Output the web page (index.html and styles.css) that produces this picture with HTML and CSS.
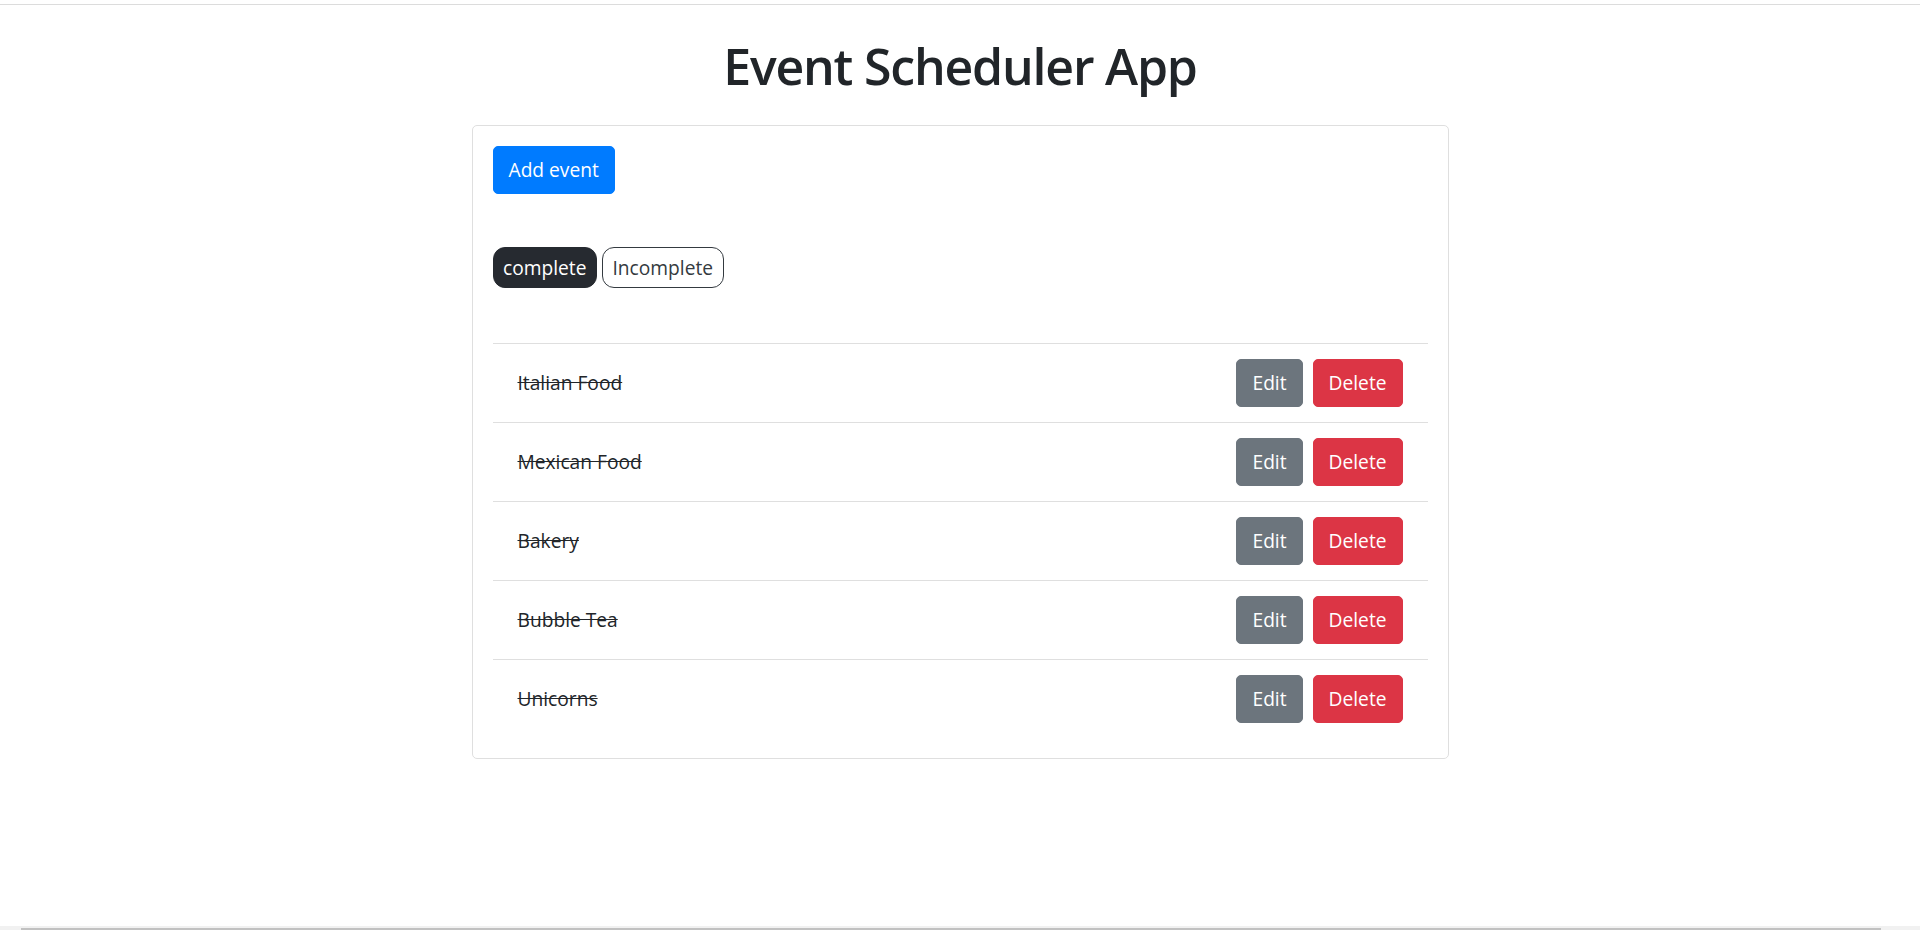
FILE: index.html
```html
<!DOCTYPE html>
<html lang="en">
<head>
<meta charset="utf-8">
<title>Event Scheduler App</title>
<link rel="stylesheet" href="styles.css">
</head>
<body>
<div class="topline"></div>
<h1 class="title">Event Scheduler App</h1>
<div class="card">
  <div class="actions">
    <button class="btn btn-primary">Add event</button>
  </div>
  <div class="filters">
    <button class="pill pill-active">complete</button>
    <button class="pill">Incomplete</button>
  </div>
  <ul class="list">
    <li class="item"><span class="name">Italian Food</span><span class="item-btns"><button class="btn btn-secondary">Edit</button><button class="btn btn-danger">Delete</button></span></li>
    <li class="item"><span class="name">Mexican Food</span><span class="item-btns"><button class="btn btn-secondary">Edit</button><button class="btn btn-danger">Delete</button></span></li>
    <li class="item"><span class="name">Bakery</span><span class="item-btns"><button class="btn btn-secondary">Edit</button><button class="btn btn-danger">Delete</button></span></li>
    <li class="item"><span class="name">Bubble Tea</span><span class="item-btns"><button class="btn btn-secondary">Edit</button><button class="btn btn-danger">Delete</button></span></li>
    <li class="item"><span class="name">Unicorns</span><span class="item-btns"><button class="btn btn-secondary">Edit</button><button class="btn btn-danger">Delete</button></span></li>
  </ul>
</div>
<div class="hscroll"><div class="hscroll-thumb"></div></div>
</body>
</html>
```
FILE: styles.css
```css
* { box-sizing: border-box; }
html, body { margin: 0; padding: 0; background: #fff; overflow: hidden; }
body {
  font-family: "Open Sans", "Noto Sans", sans-serif;
  font-size: 19.2px;
  line-height: 30px;
  color: #212529;
}
.topline {
  height: 5px;
  border-bottom: 1px solid #dcdcdc;
}
.title {
  margin: 31px 0 29px;
  font-size: 50px;
  line-height: 60px;
  font-weight: 600;
  letter-spacing: -1.2px;
  text-align: center;
  color: #212529;
}
.card {
  width: 977px;
  margin: 0 auto;
  border: 1px solid #dfdfdf;
  border-radius: 5px;
  padding: 20px;
}
.btn {
  font-family: inherit;
  font-size: 19.2px;
  line-height: 30px;
  padding: 8px 15px;
  border: 1px solid transparent;
  border-radius: 5px;
  color: #fff;
  cursor: pointer;
}
.btn-primary { background: #007bff; border-color: #007bff; }
.btn-secondary { background: #6c757d; border-color: #6c757d; }
.btn-danger { background: #dc3545; border-color: #dc3545; }
.actions { display: flex; }
.filters {
  display: flex;
  gap: 5px;
  margin-top: 53px;
}
.pill {
  font-family: inherit;
  font-size: 19.2px;
  line-height: 30px;
  padding: 4.7px 9.5px;
  border: 1px solid #343a40;
  border-radius: 12px;
  background: #fff;
  color: #343a40;
}
.pill-active { background: #262a30; border-color: #262a30; color: #fff; }
.list {
  list-style: none;
  margin: 55px 0 0;
  padding: 0;
}
.item {
  display: flex;
  align-items: center;
  justify-content: space-between;
  padding: 15px 25px;
  border-top: 1px solid #dfdfdf;
}
.name { text-decoration: line-through; }
.item-btns { display: flex; gap: 10px; }
.hscroll {
  position: fixed;
  left: 0;
  right: 0;
  bottom: 0;
  height: 4px;
  background: #f1f1f1;
}
.hscroll-thumb {
  margin: 2px 0 0 21px;
  width: 1860px;
  height: 2px;
  background: #c1c1c1;
}
```
